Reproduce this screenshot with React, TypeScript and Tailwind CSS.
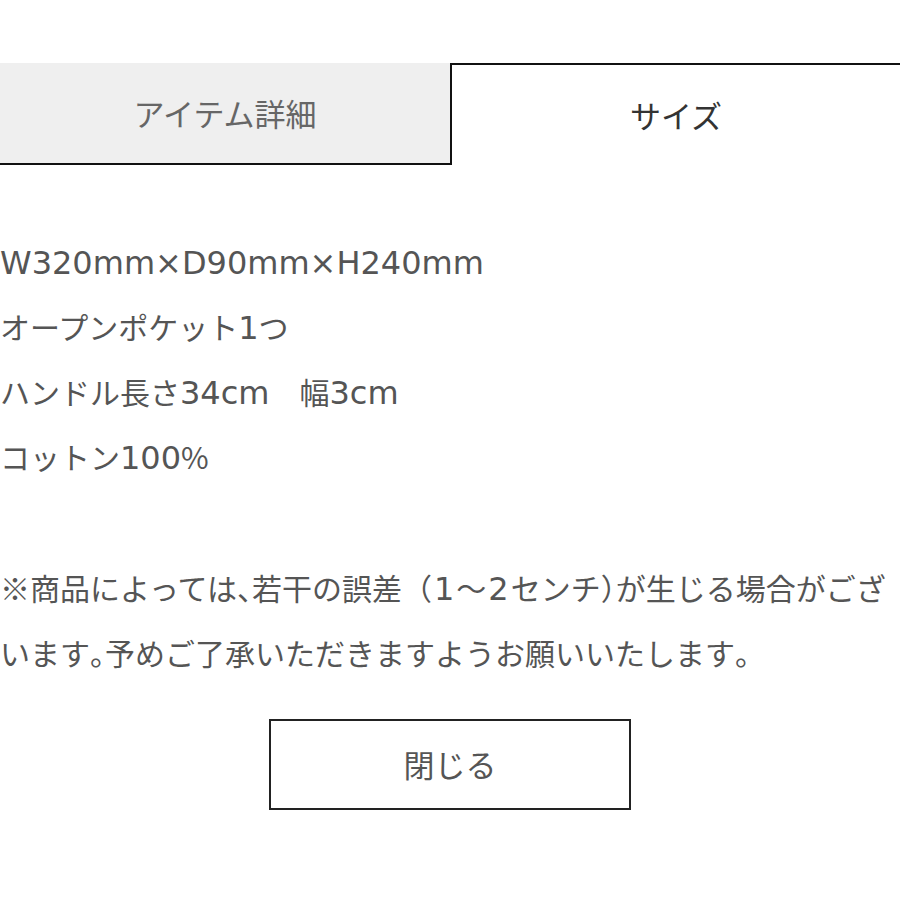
import type { ReactNode } from "react"

// Latin runs are wider in the reference than Noto's Latin glyphs
function L({ children, className = "" }: { children: ReactNode; className?: string }) {
  return (
    <span
      className={`text-[32px] leading-none ${className}`}
      style={{ fontFamily: '"DejaVu Sans", sans-serif' }}
    >
      {children}
    </span>
  )
}

// half-width punctuation (、。）)
function H({ children }: { children: ReactNode }) {
  return <span className="[font-feature-settings:'halt']">{children}</span>
}

export default function App() {
  return (
    <div
      className="w-[900px] h-[900px] bg-white overflow-hidden pt-[63px] text-[#555]"
      style={{ fontFamily: '"Noto Sans CJK JP", "Noto Sans", sans-serif' }}
    >
      <div className="flex h-[102px]">
        <div className="w-[450px] bg-[#efefef] border-b-2 border-[#111] flex items-center justify-center text-[31px] text-[#666]">
          アイテム詳細
        </div>
        <div className="flex-1 bg-white border-t-2 border-l-2 border-[#111] flex items-center justify-center text-[31px] text-[#333]">
          サイズ
        </div>
      </div>

      <div className="pt-[64px] text-[30px] leading-[65px] whitespace-nowrap">
        <p>
          <L>W320mm×D90mm×H240mm</L>
        </p>
        <p>
          オープンポケット<L>1</L>つ
        </p>
        <p>
          ハンドル長さ<L>34cm</L>　幅<L>3cm</L>
        </p>
        <p>
          コットン<L>100</L>%
        </p>
        <p className="mt-[66px]">
          ※商品によっては<H>、</H>若干の誤差（<L className="mx-[2px]">1</L>〜<L className="mx-[2px]">2</L>センチ<H>）</H>が生じる場合がござ
        </p>
        <p>
          います<H>。</H>予めご了承いただきますようお願いいたします<H>。</H>
        </p>
      </div>

      <div className="flex justify-center mt-[34px]">
        <button className="w-[362px] h-[91px] border-2 border-[#222] bg-white text-[31px] text-[#555]">
          閉じる
        </button>
      </div>
    </div>
  )
}
